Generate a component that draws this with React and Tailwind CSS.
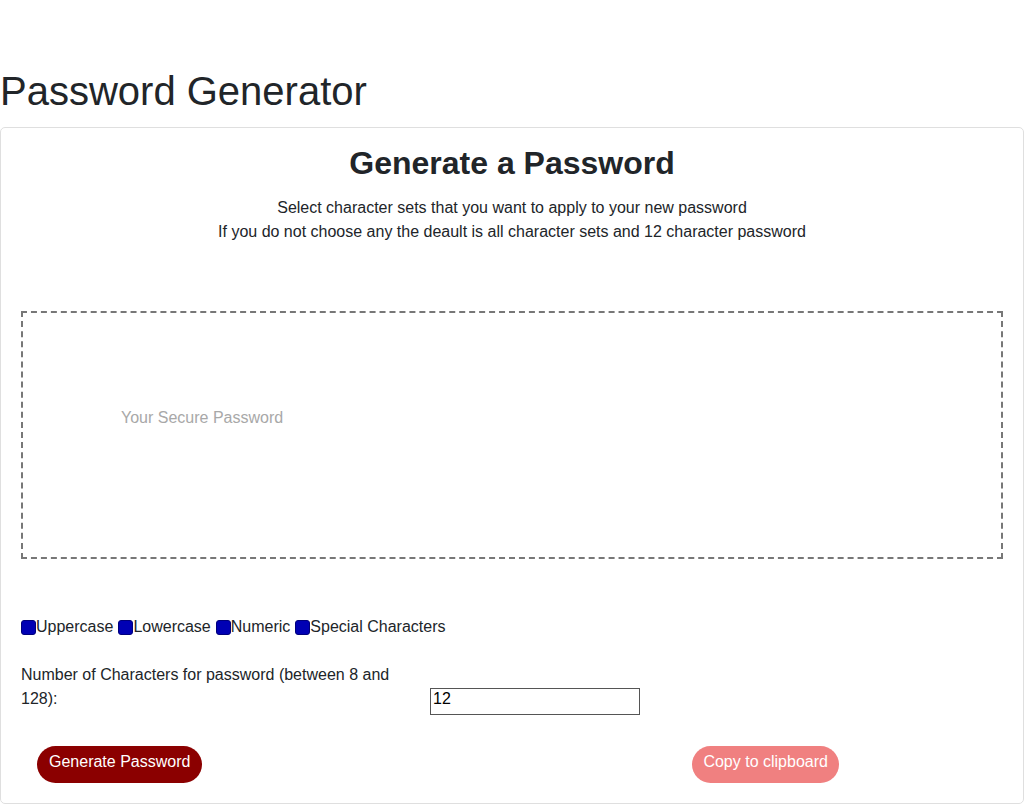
import React from 'react'

const sets = ['Uppercase', 'Lowercase', 'Numeric', 'Special Characters']

const App = () => {
  return (
    <div className="font-['Liberation_Sans',Arial,sans-serif] text-[#212529] text-base leading-6 bg-white">
      {/* Page title */}
      <h1 className="text-[40px] leading-[48px] font-normal pt-[67px] mb-[12px]">Password Generator</h1>

      {/* Card */}
      <div className="border border-[#dfdfdf] rounded-[5px] px-[20px] pt-[16px] pb-[20px]">
        <h2 className="text-[32px] leading-[38px] font-bold text-center">Generate a Password</h2>
        <div className="text-center mt-[14px]">
          <p>Select character sets that you want to apply to your new password</p>
          <p>If you do not choose any the deault is all character sets and 12 character password</p>
        </div>

        {/* Password output */}
        <textarea
          readOnly
          placeholder="Your Secure Password"
          className="block w-full h-[248px] mt-[67px] border-2 border-dashed border-[#777777] pl-[98px] pt-[93px] resize-none outline-none text-base leading-6 placeholder:text-[#a8a8a8]"
        />

        {/* Character sets */}
        <div className="flex items-center mt-[56px] h-6">
          {sets.map((s, i) => (
            <label key={s} className="flex items-center">
              <span className="w-[15px] h-[15px] rounded-[3px] bg-[#0000b4] border border-[#00007c]" />
              <span>{s}</span>
              {i < sets.length - 1 && <span className="w-[5px]" />}
            </label>
          ))}
        </div>

        {/* Length */}
        <div className="flex items-start mt-[24px]">
          <label className="w-[409px]">Number of Characters for password (between 8 and 128):</label>
          <input
            type="text"
            defaultValue="12"
            className="mt-[25px] mb-[1px] w-[210px] h-[27px] border border-[#555555] px-[2px] pt-0 pb-[5px] text-black text-base outline-none"
          />
        </div>

        {/* Actions */}
        <div className="flex mt-[30px]">
          <button className="ml-[16px] h-[37px] px-[12px] pb-[6px] rounded-full bg-[#8b0000] text-white">Generate Password</button>
          <button className="ml-[490px] h-[37px] px-[11px] pb-[6px] rounded-full bg-[#f08080] text-white">Copy to clipboard</button>
        </div>
      </div>
    </div>
  )
}

export default App
